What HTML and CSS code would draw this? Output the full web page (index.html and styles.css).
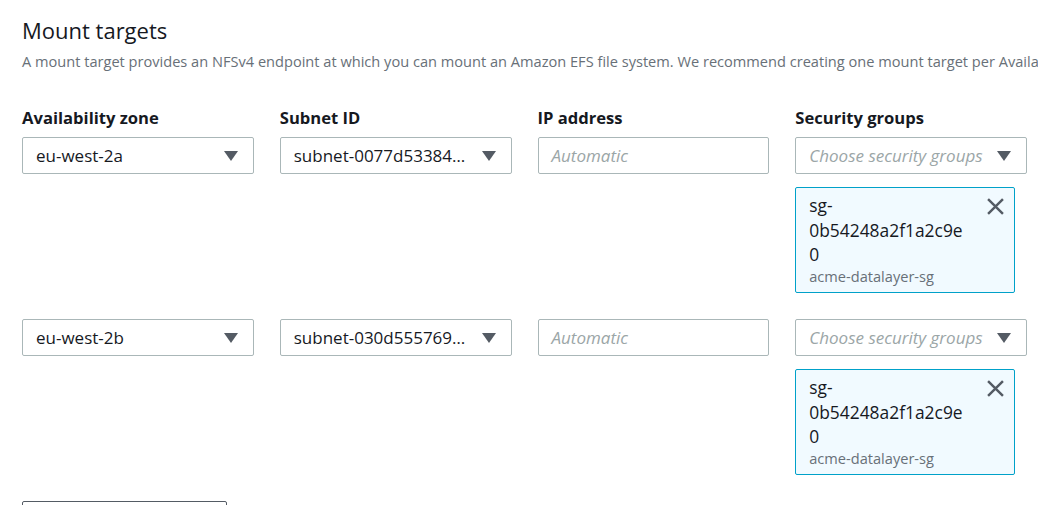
FILE: index.html
```html
<!DOCTYPE html>
<html>
<head>
<meta charset="utf-8">
<link rel="stylesheet" href="styles.css">
</head>
<body>
<div class="page">
  <h2 class="title">Mount targets</h2>
  <p class="desc">A mount target provides an NFSv4 endpoint at which you can mount an Amazon EFS file system. We recommend creating one mount target per Availability Zone.</p>

  <div class="grid">
    <div class="label">Availability zone</div>
    <div class="label">Subnet ID</div>
    <div class="label">IP address</div>
    <div class="label">Security groups</div>

    <div class="cell">
      <div class="select"><span class="val">eu-west-2a</span><svg class="caret" viewBox="0 0 14 10"><path d="M0 0h14L7 10z"/></svg></div>
    </div>
    <div class="cell">
      <div class="select"><span class="val">subnet-0077d53384b8f0a1c</span><svg class="caret" viewBox="0 0 14 10"><path d="M0 0h14L7 10z"/></svg></div>
    </div>
    <div class="cell">
      <div class="input"><span class="ph">Automatic</span></div>
    </div>
    <div class="cell">
      <div class="select"><span class="val ph">Choose security groups</span><svg class="caret" viewBox="0 0 14 10"><path d="M0 0h14L7 10z"/></svg></div>
      <div class="token">
        <div class="token-text">
          <div class="token-id">sg-0b54248a2f1a2c9e0</div>
          <div class="token-name">acme-datalayer-sg</div>
        </div>
        <svg class="dismiss" viewBox="0 0 16 16"><path d="M1 1l14 14M15 1L1 15"/></svg>
      </div>
    </div>

    <div class="cell">
      <div class="select"><span class="val">eu-west-2b</span><svg class="caret" viewBox="0 0 14 10"><path d="M0 0h14L7 10z"/></svg></div>
    </div>
    <div class="cell">
      <div class="select"><span class="val">subnet-030d555769d4c1e2f</span><svg class="caret" viewBox="0 0 14 10"><path d="M0 0h14L7 10z"/></svg></div>
    </div>
    <div class="cell">
      <div class="input"><span class="ph">Automatic</span></div>
    </div>
    <div class="cell">
      <div class="select"><span class="val ph">Choose security groups</span><svg class="caret" viewBox="0 0 14 10"><path d="M0 0h14L7 10z"/></svg></div>
      <div class="token">
        <div class="token-text">
          <div class="token-id">sg-0b54248a2f1a2c9e0</div>
          <div class="token-name">acme-datalayer-sg</div>
        </div>
        <svg class="dismiss" viewBox="0 0 16 16"><path d="M1 1l14 14M15 1L1 15"/></svg>
      </div>
    </div>
  </div>

  <button class="add">Add mount target</button>
</div>
</body>
</html>
```

FILE: styles.css
```css
html, body {
  margin: 0;
  padding: 0;
  background: #ffffff;
}
body {
  font-family: "Open Sans", "Noto Sans", Arial, sans-serif;
  color: #16191f;
  overflow: hidden;
  width: 1038px;
  height: 505px;
}
.page {
  padding: 16px 0 0 22px;
}
.title {
  margin: 0;
  font-size: 22px;
  line-height: 28px;
  font-weight: 400;
  color: #16191f;
}
.desc {
  margin: 7px 0 0 0;
  font-size: 14.6px;
  line-height: 20px;
  color: #687078;
  white-space: nowrap;
}
.grid {
  margin-top: 36px;
  width: 1005px;
  display: grid;
  grid-template-columns: repeat(4, minmax(0, 1fr));
  column-gap: 26px;
  row-gap: 26px;
}
.label {
  font-size: 16.6px;
  line-height: 22px;
  font-weight: 700;
  margin-bottom: -18px;
}
.cell {
  display: flex;
  flex-direction: column;
  min-width: 0;
}
.select, .input {
  box-sizing: border-box;
  height: 37px;
  border: 1px solid #aab7b8;
  border-radius: 2px;
  display: flex;
  align-items: center;
  padding: 0 15px 0 13px;
  font-size: 17px;
  background: #fff;
}
.val {
  flex: 1;
  min-width: 0;
  white-space: nowrap;
  overflow: hidden;
  text-overflow: ellipsis;
}
.ph {
  color: #9ba6a7;
  font-style: italic;
}
.caret {
  width: 14px;
  height: 10px;
  fill: #545b64;
  flex: none;
  margin-left: 6px;
}
.token {
  box-sizing: border-box;
  margin-top: 13px;
  width: 220px;
  height: 106px;
  border: 1px solid #00a1c9;
  border-radius: 2px;
  background: #f1faff;
  display: flex;
  align-items: flex-start;
  padding: 5px 10px 0 13px;
}
.token-text {
  width: 163px;
  flex: none;
}
.token-id {
  font-size: 17.4px;
  line-height: 24.5px;
  overflow-wrap: anywhere;
}
.token-name {
  font-size: 14.6px;
  line-height: 20px;
  color: #687078;
  margin-top: -1px;
}
.dismiss {
  width: 17px;
  height: 17px;
  margin: 5px 0 0 auto;
  stroke: #545b64;
  stroke-width: 2.3;
  fill: none;
}
.add {
  margin-top: 26px;
  width: 205px;
  height: 32px;
  box-sizing: border-box;
  border: 1px solid #545b64;
  border-radius: 2px;
  background: #fff;
  font-family: inherit;
  font-size: 14px;
  font-weight: 700;
  color: #545b64;
  display: block;
}
```
